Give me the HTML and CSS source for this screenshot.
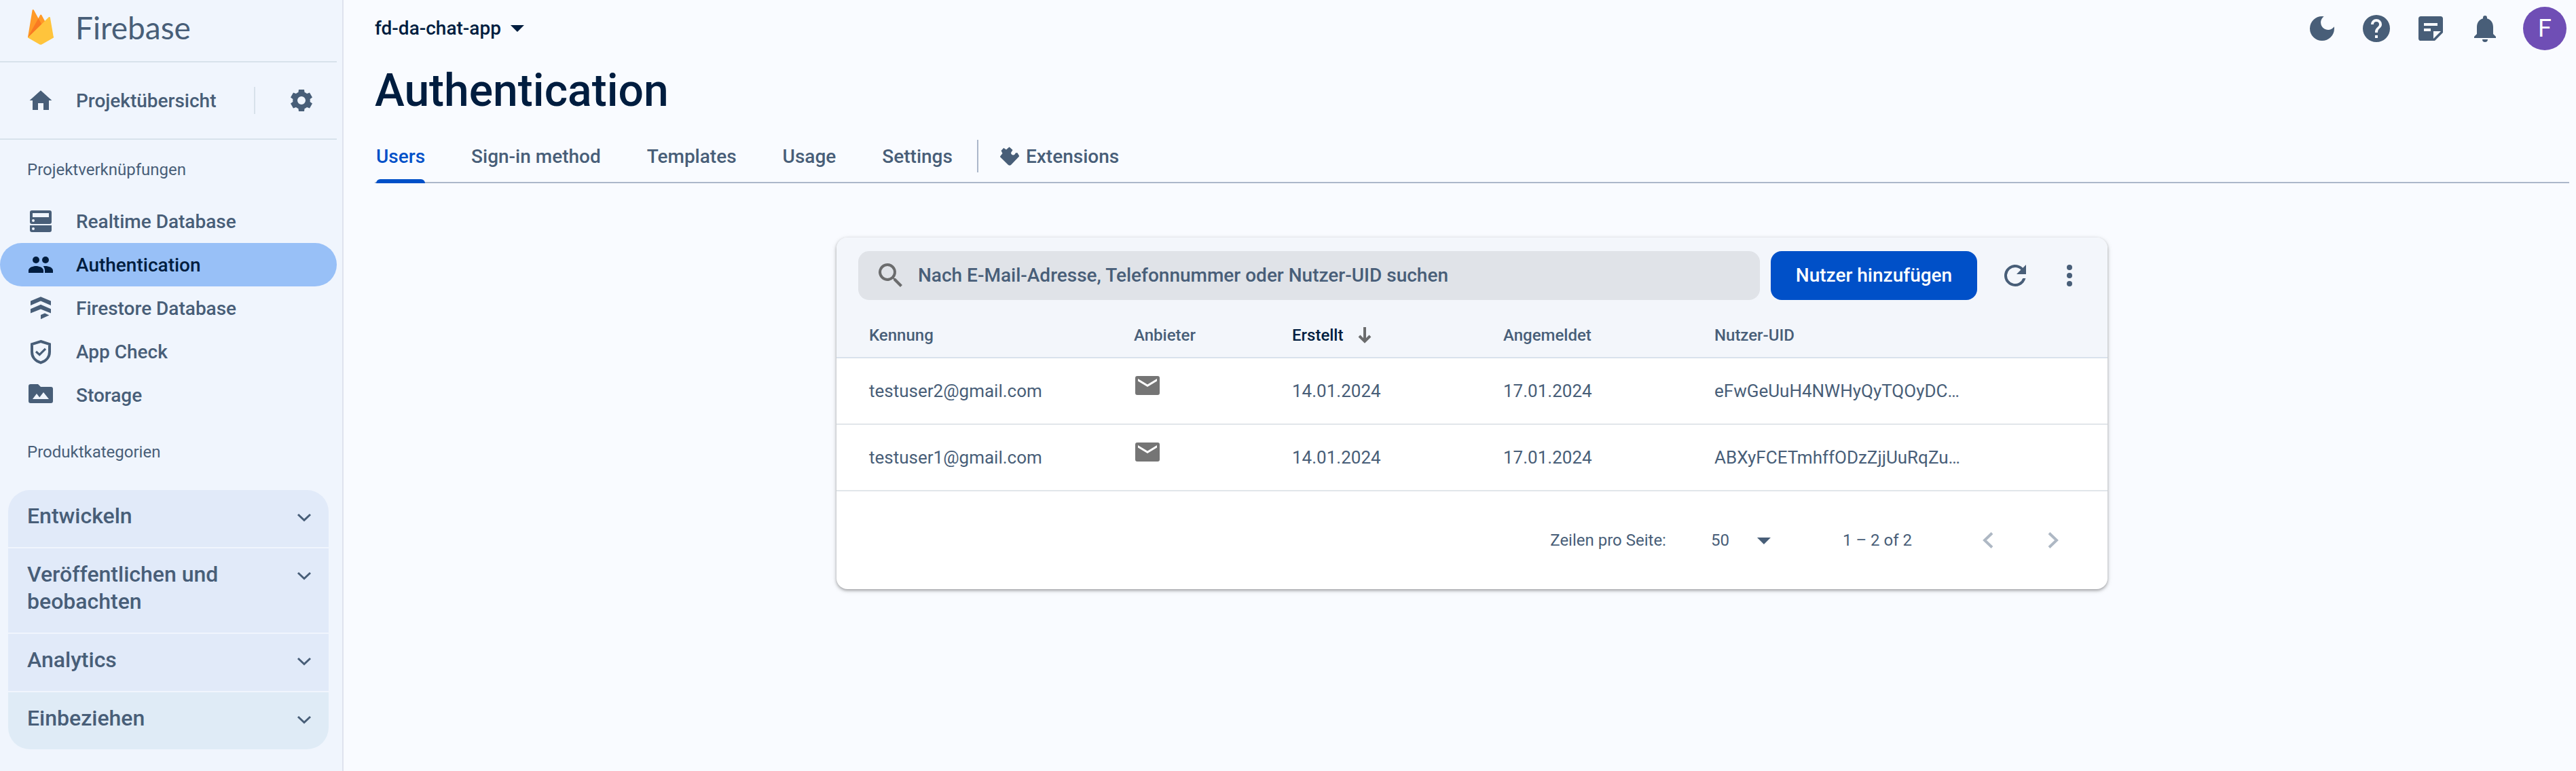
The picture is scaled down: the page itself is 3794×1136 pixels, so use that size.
FILE: index.html
```html
<!DOCTYPE html>
<html lang="de">
<head>
<meta charset="utf-8">
<meta name="viewport" content="width=device-width, initial-scale=1">
<title>Authentication – fd-da-chat-app – Firebase</title>
<link rel="stylesheet" href="styles.css">
</head>
<body>
<div class="app">
  <aside class="sidebar">
    <a class="brand" href="#">
      <svg class="brand-logo" viewBox="0 0 38 52" aria-hidden="true">
        <path fill="#ff9a27" d="M0 41 6.600 1c.2-1 1.600-1.300 2.200-.3L15.500 13l2.700-5c.5-.8 1.500-.8 2 0L38 41z"/>
        <path fill="#f97a22" d="m0 41 15.500-28L21 23z"/>
        <path fill="#ffc43c" d="M38 41.500 32.900 12c-.2-1.100-1.500-1.400-2.100-.7L0 41.500l17 9.800c1.200.7 2.700.7 3.900 0z"/>
      </svg>
      <span class="brand-name">Firebase</span>
    </a>
    <div class="overview">
      <a class="nav-item overview-link" href="#">
        <svg class="icon nav-icon" viewBox="0 0 24 24" aria-hidden="true"><path d="M10 19v-5h4v5h4v-7h2.200L12 4.600 3.800 12H6v7z"/></svg>
        <span>Projektübersicht</span>
      </a>
      <button class="icon-button settings" type="button" aria-label="Projekteinstellungen">
        <svg class="icon" viewBox="0 0 24 24" aria-hidden="true"><path d="M18.300 13a6.400 6.400 0 0 0 0-2l1.700-1.300-2-3.500-2 .8a6.400 6.400 0 0 0-1.700-1L14 4h-4l-.3 2a6.400 6.400 0 0 0-1.700 1l-2-.8-2 3.500L5.700 11a6.400 6.400 0 0 0 0 2L4 14.300l2 3.500 2-.8a6.400 6.400 0 0 0 1.700 1l.3 2h4l.3-2a6.400 6.400 0 0 0 1.700-1l2 .8 2-3.500zM12 15a3 3 0 1 1 0-6 3 3 0 0 1 0 6z"/></svg>
      </button>
    </div>
    <h2 class="section-label">Projektverknüpfungen</h2>
    <nav class="shortcuts" aria-label="Projektverknüpfungen">
      <a class="nav-item" href="#">
        <svg class="icon nav-icon" viewBox="0 0 24 24" aria-hidden="true"><path fill-rule="evenodd" d="M5.500 4h13A1.500 1.500 0 0 1 20 5.500v7a1.500 1.500 0 0 1-1.500 1.500h-13A1.500 1.500 0 0 1 4 12.500v-7A1.500 1.500 0 0 1 5.500 4zM6 6v3h12V6zm.5 4.500a1 1 0 1 0 0 2 1 1 0 0 0 0-2zM4 15h16v3.500a1.500 1.500 0 0 1-1.500 1.500h-13A1.500 1.500 0 0 1 4 18.500zm2.500 1.500a1 1 0 1 0 0 2 1 1 0 0 0 0-2z"/></svg>
        <span>Realtime Database</span>
      </a>
      <a class="nav-item nav-item-active" href="#" aria-current="page">
        <svg class="icon nav-icon" viewBox="0 0 24 24" aria-hidden="true"><circle cx="8.500" cy="8.500" r="2.500"/><circle cx="15.500" cy="8.500" r="2.500"/><path d="M3 18v-1.700C3 14 6.300 13 8.500 13s5.500 1 5.500 3.300V18zM13.800 13.100c.5-.1 1.100-.1 1.700-.1 2.200 0 5.500 1 5.500 3.300V18h-6v-1.700c0-1.400-.5-2.400-1.200-3.200z"/></svg>
        <span>Authentication</span>
      </a>
      <a class="nav-item" href="#">
        <svg class="icon nav-icon" viewBox="0 0 24 24" aria-hidden="true"><path d="m12 3.600 7.500 3.200V10L12 6.800 4.500 10V6.800zM12 9.400l7.500 3.200v3.200L12 12.700l-7.500 3.100v-3.200zM12 17l3-1.200 3.200 1.500L12 20.100z"/></svg>
        <span>Firestore Database</span>
      </a>
      <a class="nav-item" href="#">
        <svg class="icon nav-icon" viewBox="0 0 24 24" aria-hidden="true"><path fill="none" stroke="currentColor" stroke-width="2" d="m12 4.500 6.500 2.100v5.600c0 4-2.700 6.900-6.500 8-3.800-1.100-6.500-4-6.500-8V6.600z"/><path fill="none" stroke="currentColor" stroke-width="1.600" d="m8.500 12 2.600 2.300 4.400-4.400"/></svg>
        <span>App Check</span>
      </a>
      <a class="nav-item" href="#">
        <svg class="icon nav-icon" viewBox="0 0 24 24" aria-hidden="true"><path fill-rule="evenodd" d="M4.500 4H10l2 2h7.500A1.500 1.500 0 0 1 21 7.500v9a1.500 1.500 0 0 1-1.500 1.500h-15A1.500 1.500 0 0 1 3 16.500v-11A1.500 1.500 0 0 1 4.500 4zM6 15h12l-4-5-2.900 3.700L9 11z"/></svg>
        <span>Storage</span>
      </a>
    </nav>
    <h2 class="section-label section-label-products">Produktkategorien</h2>
    <div class="categories">
      <button class="category" type="button"><span>Entwickeln</span><svg class="chevron" viewBox="0 0 24 24" aria-hidden="true"><path d="m3 8 9 8.500L21 8"/></svg></button>
      <button class="category" type="button"><span>Veröffentlichen und beobachten</span><svg class="chevron" viewBox="0 0 24 24" aria-hidden="true"><path d="m3 8 9 8.500L21 8"/></svg></button>
      <button class="category" type="button"><span>Analytics</span><svg class="chevron" viewBox="0 0 24 24" aria-hidden="true"><path d="m3 8 9 8.500L21 8"/></svg></button>
      <button class="category category-engage" type="button"><span>Einbeziehen</span><svg class="chevron" viewBox="0 0 24 24" aria-hidden="true"><path d="m3 8 9 8.500L21 8"/></svg></button>
    </div>
  </aside>

  <main class="main">
    <header class="topbar">
      <button class="project-picker" type="button">fd-da-chat-app <span class="caret"></span></button>
      <div class="top-actions">
        <button class="icon-button" type="button" aria-label="Dunkles Design"><svg class="icon" viewBox="0 0 24 24" aria-hidden="true"><path d="M12 3a9 9 0 1 0 9 9q0-.7-.1-1.400a5.400 5.400 0 1 1-7.500-7.500Q12.700 3 12 3z"/></svg></button>
        <button class="icon-button" type="button" aria-label="Hilfe"><svg class="icon" viewBox="0 0 24 24" aria-hidden="true"><path d="M12 2a10 10 0 1 0 0 20 10 10 0 0 0 0-20zm1 17h-2v-2h2zm2.070-7.750-.9.920C13.450 12.900 13 13.500 13 15h-2v-.5c0-1.100.45-2.100 1.170-2.830l1.240-1.260c.37-.36.59-.86.59-1.410a2 2 0 0 0-4 0H8a4 4 0 0 1 8 0c0 .88-.36 1.680-.93 2.250z"/></svg></button>
        <button class="icon-button" type="button" aria-label="Versionshinweise"><svg class="icon" viewBox="0 0 24 24" aria-hidden="true"><path fill-rule="evenodd" d="M4.800 3h14.400A1.800 1.800 0 0 1 21 4.800V15l-6 6H4.800A1.800 1.800 0 0 1 3 19.200V4.800A1.800 1.800 0 0 1 4.800 3zM7 8v2h10V8zm0 4v2h5v-2zm7 2v5.500l5.500-5.500z"/></svg></button>
        <button class="icon-button" type="button" aria-label="Benachrichtigungen"><svg class="icon" viewBox="0 0 24 24" aria-hidden="true"><path d="M10 20h4a2 2 0 0 1-4 0zm8-4v-5c0-3.070-1.640-5.640-4.500-6.320V4a1.500 1.500 0 0 0-3 0v.68C7.630 5.360 6 7.920 6 11v5l-2 2v1h16v-1z"/></svg></button>
        <button class="avatar" type="button" aria-label="Google-Konto">F</button>
      </div>
    </header>
    <h1 class="page-title">Authentication</h1>
    <nav class="tabs" aria-label="Authentication">
      <a class="tab tab-active" href="#" aria-current="page">Users</a>
      <a class="tab" href="#">Sign-in method</a>
      <a class="tab" href="#">Templates</a>
      <a class="tab" href="#">Usage</a>
      <a class="tab" href="#">Settings</a>
      <span class="tab-divider"></span>
      <a class="tab tab-extensions" href="#">
        <svg class="extensions-icon" viewBox="0 0 28 28" aria-hidden="true"><path d="M.3 14 3.500 10 1.500 6l3.700-4L9 4.500 13.500.5 18.500 5 16 9c0 3.200 3.500 4.600 5.500 2.500L23 9.300h2.500l2.200 3.700q.6 1 0 1.800L16 27q-2 1.500-4 0L.3 15.500q-.5-.8 0-1.500z"/></svg>
        Extensions
      </a>
    </nav>

    <section class="card" aria-label="Nutzer">
      <div class="toolbar">
        <label class="search">
          <svg class="icon search-icon" viewBox="0 0 24 24" aria-hidden="true"><path d="M15.500 14h-.79l-.28-.27A6.500 6.500 0 1 0 13.730 14.430l.27.28v.79l5 4.990L20.490 19zm-6 0a4.500 4.500 0 1 1 0-9 4.500 4.500 0 0 1 0 9z"/></svg>
          <input class="search-input" type="text" aria-label="Nutzer suchen" placeholder="Nach E-Mail-Adresse, Telefonnummer oder Nutzer-UID suchen">
        </label>
        <button class="primary-button" type="button">Nutzer hinzufügen</button>
        <button class="icon-button toolbar-icon" type="button" aria-label="Aktualisieren"><svg class="icon" viewBox="0 0 24 24" aria-hidden="true"><path d="M17.650 6.350A8 8 0 1 0 19.730 14h-2.080A6 6 0 1 1 12 6c1.660 0 3.140.69 4.220 1.780L13 11h7V4z"/></svg></button>
        <button class="icon-button toolbar-icon" type="button" aria-label="Weitere Optionen"><svg class="icon" viewBox="0 0 24 24" aria-hidden="true"><circle cx="12" cy="6" r="2"/><circle cx="12" cy="12" r="2"/><circle cx="12" cy="18" r="2"/></svg></button>
      </div>
      <table class="users">
        <thead>
          <tr>
            <th class="col-id" scope="col">Kennung</th>
            <th class="col-provider" scope="col">Anbieter</th>
            <th class="col-date sorted" scope="col" aria-sort="descending"><span class="sort-label">Erstellt <svg class="sort-arrow" viewBox="0 0 20 24" aria-hidden="true"><path d="M10 0v21M2 13l8 8 8-8"/></svg></span></th>
            <th class="col-date" scope="col">Angemeldet</th>
            <th scope="col">Nutzer-UID</th>
          </tr>
        </thead>
        <tbody>
          <tr>
            <td class="col-id">testuser2@gmail.com</td>
            <td><svg class="mail" viewBox="0 0 36 28" role="img" aria-label="E-Mail"><path fill-rule="evenodd" d="M3 0h30a3 3 0 0 1 3 3v22a3 3 0 0 1-3 3H3a3 3 0 0 1-3-3V3a3 3 0 0 1 3-3zm1 4v3.500l14 8.500 14-8.500V4l-14 8.500z"/></svg></td>
            <td>14.01.2024</td>
            <td>17.01.2024</td>
            <td>eFwGeUuH4NWHyQyTQOyDC…</td>
          </tr>
          <tr>
            <td class="col-id">testuser1@gmail.com</td>
            <td><svg class="mail" viewBox="0 0 36 28" role="img" aria-label="E-Mail"><path fill-rule="evenodd" d="M3 0h30a3 3 0 0 1 3 3v22a3 3 0 0 1-3 3H3a3 3 0 0 1-3-3V3a3 3 0 0 1 3-3zm1 4v3.500l14 8.500 14-8.500V4l-14 8.500z"/></svg></td>
            <td>14.01.2024</td>
            <td>17.01.2024</td>
            <td>ABXyFCETmhffODzZjjUuRqZu…</td>
          </tr>
        </tbody>
      </table>
      <footer class="pager">
        <label class="page-size">Zeilen pro Seite:
          <span class="select-wrap"><select class="page-select"><option>50</option><option>100</option><option>250</option></select><span class="caret select-caret"></span></span>
        </label>
        <span class="range">1 – 2 of 2</span>
        <div class="page-buttons">
          <button class="icon-button page-button" type="button" aria-label="Vorherige Seite" disabled><svg class="page-arrow" viewBox="0 0 16 24" aria-hidden="true"><path d="M14 1.500 3 12l11 10.500"/></svg></button>
          <button class="icon-button page-button" type="button" aria-label="Nächste Seite" disabled><svg class="page-arrow" viewBox="0 0 16 24" aria-hidden="true"><path d="m2 1.500 11 10.500L2 22.500"/></svg></button>
        </div>
      </footer>
    </section>
  </main>
</div>
</body>
</html>
```
FILE: styles.css
```css
* {
  box-sizing: border-box;
}

:root {
  --ink: #001d3f;
  --muted: #485e78;
  --blue: #0050c8;
}

body {
  margin: 0;
  background: #f9fbff;
  color: var(--muted);
  font-family: Roboto, "Liberation Sans", sans-serif;
  font-size: 28px;
  line-height: 40px;
}

a {
  color: inherit;
  text-decoration: none;
}

button,
input,
select {
  margin: 0;
  padding: 0;
  border: 0;
  background: none;
  color: inherit;
  font: inherit;
}

svg {
  display: block;
  flex: none;
}

.app {
  display: flex;
  min-height: 100vh;
}

.icon {
  width: 48px;
  height: 48px;
  fill: currentColor;
}

.icon-button {
  display: flex;
  flex: none;
  align-items: center;
  justify-content: center;
  width: 80px;
  height: 80px;
}

/* Sidebar */

.sidebar {
  flex: none;
  width: 506px;
  padding-right: 8px;
  border-right: 2px solid #dfe3ee;
  background: #f0f5fd;
}

.brand {
  display: flex;
  align-items: center;
  gap: 32px;
  height: 92px;
  padding: 0 0 10px 41px;
  border-bottom: 2px solid #d8e2eb;
}

.brand-logo {
  width: 38px;
  height: 52px;
}

.brand-name {
  padding-top: 2px;
  font-family: Lato, sans-serif;
  font-size: 46px;
  line-height: 56px;
}

.overview {
  display: flex;
  align-items: center;
  height: 114px;
  padding: 24px 12px 24px 0;
  border-bottom: 2px solid #d8e2eb;
}

.overview-link {
  flex: 1;
}

.settings {
  position: relative;
  margin-left: 28px;
}

.settings::before {
  position: absolute;
  top: 20px;
  left: -30px;
  width: 2px;
  height: 40px;
  background: #d8e2eb;
  content: "";
}

.section-label {
  margin: 0;
  padding: 28px 0 0 40px;
  height: 88px;
  font-size: 24px;
  font-weight: 400;
  line-height: 32px;
}

.section-label-products {
  height: 108px;
  padding-top: 36px;
}

.nav-item {
  display: flex;
  align-items: center;
  gap: 28px;
  height: 64px;
  padding-left: 36px;
  border-radius: 32px;
  font-weight: 500;
}

.nav-item span {
  padding-top: 2px;
}

.nav-item-active {
  background: #98c0f7;
  color: var(--ink);
}

.categories {
  display: flex;
  flex-direction: column;
  gap: 2px;
  margin: 0 12px 32px;
  border-radius: 32px;
  overflow: hidden;
}

.category {
  display: flex;
  align-items: flex-start;
  justify-content: space-between;
  padding: 18px 24px 26px 28px;
  background: #e1eaf9;
  font-size: 32px;
  font-weight: 500;
  text-align: left;
}

.category span {
  max-width: 320px;
}

.category-engage {
  background: #dfebf6;
}

.chevron {
  width: 24px;
  height: 24px;
  margin-top: 10px;
  fill: none;
  stroke: currentColor;
  stroke-width: 3;
}

/* Header */

.main {
  flex: 1;
  min-width: 0;
  padding: 0 10px 0 46px;
}

.topbar {
  display: flex;
  align-items: center;
  justify-content: space-between;
  height: 84px;
}

.project-picker {
  display: flex;
  align-items: center;
  gap: 14px;
  color: var(--ink);
  font-weight: 500;
}

.caret {
  width: 20px;
  height: 10px;
  background: currentColor;
  clip-path: polygon(0 0, 100% 0, 50% 100%);
}

.top-actions {
  display: flex;
  align-items: center;
  padding-right: 4px;
}

.avatar {
  width: 64px;
  height: 64px;
  margin-left: 16px;
  border-radius: 50%;
  background: #6f4eb5;
  color: #fff;
  font-size: 36px;
}

.page-title {
  margin: 0;
  padding: 10px 0 30px;
  color: var(--ink);
  font-size: 66px;
  font-weight: 500;
  line-height: 80px;
}

.tabs {
  display: flex;
  height: 66px;
  padding-left: 2px;
  border-bottom: 2px solid #acb7ca;
}

.tab {
  margin-right: 68px;
  padding-top: 7px;
  font-weight: 500;
  white-space: nowrap;
}

.tab-active {
  position: relative;
  color: var(--blue);
}

.tab-active::after {
  position: absolute;
  right: 0;
  bottom: -2px;
  left: 0;
  height: 6px;
  border-radius: 6px 6px 0 0;
  background: var(--blue);
  content: "";
}

.tab-divider {
  width: 2px;
  height: 48px;
  margin: 2px 32px 0 -32px;
  background: #acb7ca;
}

.tab-extensions {
  display: flex;
  gap: 10px;
}

.extensions-icon {
  width: 28px;
  height: 28px;
  margin-top: 5px;
  fill: currentColor;
}

/* Users card */

.card {
  max-width: 1872px;
  margin: 80px auto 32px;
  border-radius: 16px;
  background: #fff;
  box-shadow: 0 2px 4px rgb(0 0 0 / 30%), 0 2px 8px rgb(0 0 0 / 12%);
  overflow: hidden;
}

.toolbar {
  display: flex;
  align-items: center;
  padding: 20px 16px 20px 32px;
  background: #f3f6fb;
}

.search {
  display: flex;
  flex: 1;
  align-items: center;
  gap: 16px;
  height: 72px;
  margin-right: 16px;
  padding: 0 24px;
  border-radius: 16px;
  background: #e0e3e8;
}

.search-icon {
  color: #6b6c6d;
}

.search-input {
  flex: 1;
  min-width: 0;
  outline: 0;
  font-weight: 500;
}

.search-input::placeholder {
  color: var(--muted);
  opacity: 1;
}

.primary-button {
  min-width: 304px;
  height: 72px;
  margin-right: 16px;
  padding: 0 32px;
  border-radius: 16px;
  background: var(--blue);
  color: #fff;
  font-weight: 500;
}

.toolbar-icon {
  height: 72px;
}

.users {
  width: 100%;
  border-spacing: 0;
  table-layout: fixed;
  text-align: left;
}

.users th {
  height: 66px;
  padding: 0;
  border-bottom: 2px solid #d9e2ec;
  background: #f3f6fb;
  font-size: 24px;
  font-weight: 500;
}

.users td {
  height: 98px;
  padding: 0;
  border-bottom: 2px solid #e1e6ea;
  font-size: 26px;
}

.users .col-id {
  width: 438px;
  padding-left: 48px;
}

.users .col-provider {
  width: 233px;
}

.users .col-date {
  width: 311px;
}

.users .sorted {
  color: var(--ink);
}

.sort-label {
  display: flex;
  align-items: center;
  gap: 22px;
}

.sort-arrow {
  width: 20px;
  height: 24px;
  fill: none;
  stroke: #6b6c6d;
  stroke-width: 4;
}

.mail {
  width: 36px;
  height: 28px;
  margin: 0 0 16px 2px;
  fill: #757575;
}

.pager {
  display: flex;
  align-items: center;
  justify-content: flex-end;
  height: 144px;
  padding-right: 40px;
  font-size: 24px;
}

.page-size {
  display: flex;
  align-items: center;
  gap: 66px;
}

.select-wrap {
  position: relative;
  display: flex;
  width: 88px;
}

.page-select {
  width: 100%;
  appearance: none;
}

.select-caret {
  position: absolute;
  top: 16px;
  right: 0;
  pointer-events: none;
}

.range {
  margin-left: 106px;
}

.page-buttons {
  display: flex;
  gap: 16px;
  margin-left: 72px;
}

.page-arrow {
  width: 16px;
  height: 24px;
  fill: none;
  stroke: #aeb8c4;
  stroke-width: 4;
}
```
